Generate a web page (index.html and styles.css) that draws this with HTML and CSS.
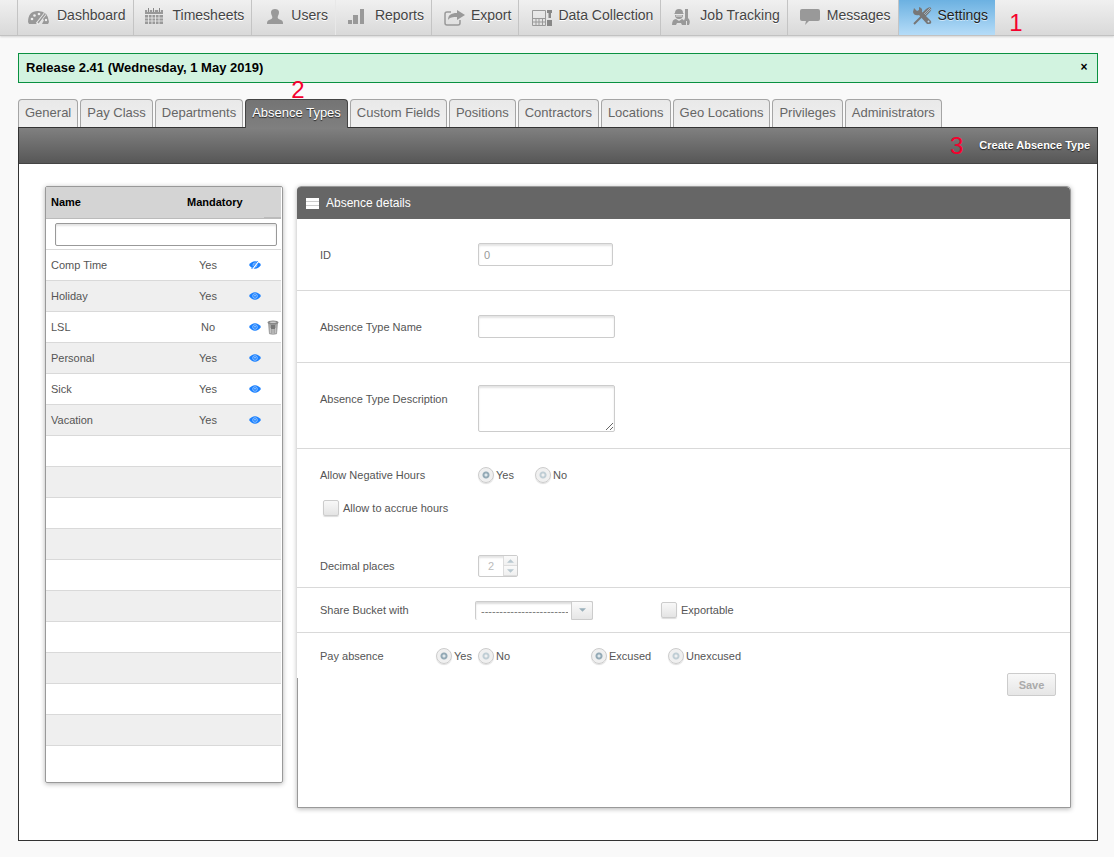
FILE: index.html
```html
<!DOCTYPE html>
<html lang="en">
<head>
    <meta charset="UTF-8">
    <meta name="viewport" content="width=device-width, initial-scale=1.0">
    <title>Settings - Absence Types</title>
    <link rel="stylesheet" href="styles.css">
</head>
<body>
    <!-- shared icons -->
    <svg width="0" height="0" class="sprite" aria-hidden="true">
        <symbol id="eye" viewBox="0 0 12 8">
            <path d="M0 4Q2.500 .3 6 .3T12 4Q9.500 7.700 6 7.700T0 4Z" fill="#1a80ff"/>
            <circle cx="6" cy="4" r="2.300" fill="none" stroke="#a9d0ff" stroke-width=".8"/>
            <circle cx="6" cy="3.700" r=".7" fill="#d5e8ff"/>
        </symbol>
        <symbol id="eye-off" viewBox="0 0 12 8">
            <path d="M0 4Q2.500 .3 6 .3T12 4Q9.500 7.700 6 7.700T0 4Z" fill="#1a80ff"/>
            <circle cx="6" cy="4" r="2" fill="none" stroke="#a9d0ff" stroke-width=".8"/>
            <path d="M3.300 8L9.500 0" stroke="#fff" stroke-width="1.800"/>
            <path d="M2.600 8L8.700 0" stroke="#1a80ff" stroke-width=".9"/>
        </symbol>
    </svg>

    <nav class="main-nav">
        <a href="#">
            <svg viewBox="0 0 39 35"><path d="M10 22q0-11 10-11t11 11l-1 2h-6l2-4-3-2-4 6h-8z" fill="#999"/><circle cx="14" cy="19" r="1.300" fill="#eee"/><circle cx="16.500" cy="15.500" r="1.300" fill="#eee"/><circle cx="21" cy="14" r="1.300" fill="#eee"/><circle cx="28" cy="20" r="1.200" fill="#eee"/><path d="M19 24l8-10" stroke="#eee" stroke-width="3"/><path d="M20 23l7-9" stroke="#999" stroke-width="1.500"/></svg>
            <span>Dashboard</span>
        </a>
        <a href="#">
            <svg viewBox="0 0 39 35"><path d="M11 10h18v4H11zM11 15h18v9H11z" fill="#999"/><path d="M14.500 8v4M19.500 8v4M25.500 8v4" stroke="#eee" stroke-width="2.500"/><path d="M14.500 8v4M19.500 8v4M25.500 8v4" stroke="#888"/><path d="M11 18h18M11 21h18M14.500 15v9M18 15v9M21.500 15v9M25 15v9" stroke="#eee" stroke-width=".8"/></svg>
            <span>Timesheets</span>
        </a>
        <a href="#">
            <svg viewBox="0 0 39 35"><path d="M20 16c-2-4-1-7 3-7s5 3 3 7c-1 2 0 3 3 4 2 1 2 2 2 4H15c0-2 0-3 2-4 3-1 4-2 3-4z" fill="#999"/></svg>
            <span>Users</span>
        </a>
        <a href="#" class="plain">
            <svg viewBox="0 0 39 35"><path d="M12 20h4v4h-4zM17 15h5v9h-5zM24 9h4v15h-4z" fill="#999"/></svg>
            <span>Reports</span>
        </a>
        <a href="#">
            <svg viewBox="0 0 39 35"><path d="M19 12h-4q-2 0-2 2v9q0 2 2 2h11q2 0 2-2v-3" fill="none" stroke="#999" stroke-width="1.500"/><path d="M16 20c0-5 3-7 9-7v-3l8 5-8 5v-3c-4 0-7 0-9 3z" fill="#999"/></svg>
            <span>Export</span>
        </a>
        <a href="#">
            <svg viewBox="0 0 39 35"><path d="M13.500 10.500h13v15h-13zM13 18.500h14M13 22h14M17 19v6M20 19v6M23.500 19v6" fill="none" stroke="#999"/><path d="M28 10h5v8h-5zM28 20h5v6h-5z" fill="#888"/><path d="M28 13h1.500v5H28zM32 13h1.500v5H32z" fill="#e6e6e6"/></svg>
            <span>Data Collection</span>
        </a>
        <a href="#">
            <svg viewBox="0 0 39 35"><path d="M14 13q0-4 4-4t4 4l1 1H13zM14 15h8q0 4-4 4t-4-4zM11 25q0-6 4-6l3 2 3-2q3 1 3 6h-3l-1-2h-4l-1 2z" fill="#999"/><path d="M15 16h6" stroke="#e6e6e6"/><path d="M24 9h3v9q3 3 1 7h-2v-4h-1v4h-2q-1-4 1-7z" fill="#999"/></svg>
            <span>Job Tracking</span>
        </a>
        <a href="#">
            <svg viewBox="0 0 39 35"><path d="M14 9h16q2 0 2 2v8q0 2-2 2h-9l-4 4 1-4h-4q-2 0-2-2v-8q0-2 2-2z" fill="#999"/></svg>
            <span>Messages</span>
        </a>
        <a href="#" class="active">
            <svg viewBox="0 0 39 35"><path d="M15 24l9-9" stroke="#777" stroke-width="2"/><path d="M22 14l5-5q4-3 5-1t-2 5l-5 5z" fill="#777"/><path d="M25 14l6-6M26 15l6-6" stroke="#b0cde0" stroke-width=".7"/><path d="M15 8l3 3 2-1 0-3q4 1 3 5l9 9q1 3-2 3h-2l-8-9q-5 1-6-3z" fill="#777"/><circle cx="29.500" cy="21.500" r="1" fill="#b5d8f0"/></svg>
            <span>Settings</span>
        </a>
        <span class="step step-1">1</span>
    </nav>

    <div class="container">
        <div class="notice">
            <strong>Release 2.41 (Wednesday, 1 May 2019)</strong>
            <button type="button" class="notice-close" aria-label="Close">×</button>
        </div>

        <div class="tabs">
            <a href="#">General</a>
            <a href="#">Pay Class</a>
            <a href="#">Departments</a>
            <a href="#" class="active">Absence Types<span class="step step-2">2</span></a>
            <a href="#">Custom Fields</a>
            <a href="#">Positions</a>
            <a href="#">Contractors</a>
            <a href="#">Locations</a>
            <a href="#">Geo Locations</a>
            <a href="#">Privileges</a>
            <a href="#">Administrators</a>
        </div>

        <main class="panel">
            <div class="toolbar">
                <span class="step">3</span>
                <a href="#">Create Absence Type</a>
            </div>

            <div class="content">
                <!-- absence type list -->
                <section class="list">
                    <table>
                        <colgroup>
                            <col class="col-name">
                            <col class="col-mandatory">
                            <col class="col-eye">
                            <col class="col-bin">
                        </colgroup>
                        <thead>
                            <tr>
                                <th>Name</th>
                                <th colspan="2">Mandatory</th>
                                <th class="end"></th>
                            </tr>
                            <tr class="filter">
                                <td colspan="4"><input type="text" aria-label="Filter by name"></td>
                            </tr>
                        </thead>
                        <tbody>
                            <tr><td>Comp Time</td><td>Yes</td><td><svg class="eye"><use href="#eye-off"/></svg></td><td></td></tr>
                            <tr><td>Holiday</td><td>Yes</td><td><svg class="eye"><use href="#eye"/></svg></td><td></td></tr>
                            <tr><td>LSL</td><td>No</td><td><svg class="eye"><use href="#eye"/></svg></td><td><svg class="bin" viewBox="0 0 12 15"><path d="M1 3h10l-1 11q-4 1.500-8 0z" fill="#a5a5a5"/><ellipse cx="6" cy="2.500" rx="5.500" ry="2" fill="#888"/><ellipse cx="6" cy="2.300" rx="3.500" ry=".8" fill="#ccc"/><path d="M3.500 8v5M6 9v5M8.500 8v5" stroke="#ccc" stroke-width=".8"/><path d="M4 5h4v4H4z" fill="#777"/></svg></td></tr>
                            <tr><td>Personal</td><td>Yes</td><td><svg class="eye"><use href="#eye"/></svg></td><td></td></tr>
                            <tr><td>Sick</td><td>Yes</td><td><svg class="eye"><use href="#eye"/></svg></td><td></td></tr>
                            <tr><td>Vacation</td><td>Yes</td><td><svg class="eye"><use href="#eye"/></svg></td><td></td></tr>
                            <tr><td colspan="4"></td></tr>
                            <tr><td colspan="4"></td></tr>
                            <tr><td colspan="4"></td></tr>
                            <tr><td colspan="4"></td></tr>
                            <tr><td colspan="4"></td></tr>
                            <tr><td colspan="4"></td></tr>
                            <tr><td colspan="4"></td></tr>
                            <tr><td colspan="4"></td></tr>
                            <tr><td colspan="4"></td></tr>
                            <tr><td colspan="4"></td></tr>
                        </tbody>
                    </table>
                </section>

                <!-- details form -->
                <form class="details">
                    <h2>
                        <svg viewBox="0 0 13 11"><path d="M0 0h13v11H0z" fill="#fff"/><path d="M0 3.500h13M0 7.500h13" stroke="#ccc"/></svg>
                        Absence details
                    </h2>
                    <div class="rows">
                        <div class="row">
                            <label class="name" for="absId">ID</label>
                            <input type="text" id="absId" class="text-id" value="0" disabled>
                        </div>
                        <div class="row">
                            <label class="name" for="absName">Absence Type Name</label>
                            <input type="text" id="absName">
                        </div>
                        <div class="row row-desc">
                            <label class="name" for="absDesc">Absence Type Description</label>
                            <textarea id="absDesc"></textarea>
                        </div>
                        <div class="row row-hours">
                            <div class="line">
                                <span class="name">Allow Negative Hours</span>
                                <label class="option spaced"><input type="radio" name="negative" checked>Yes</label>
                                <label class="option"><input type="radio" name="negative">No</label>
                            </div>
                            <div class="line accrue">
                                <label class="tick"><input type="checkbox">Allow to accrue hours</label>
                            </div>
                            <div class="line decimals">
                                <label class="name" for="decimals">Decimal places</label>
                                <div class="spinner">
                                    <input type="number" id="decimals" value="2" disabled>
                                    <div class="spinner-buttons">
                                        <button type="button" aria-label="Increase" disabled><svg viewBox="0 0 8 4"><path d="M4 0l4 4H0z" fill="#b9c8d0"/></svg></button>
                                        <button type="button" aria-label="Decrease" disabled><svg viewBox="0 0 8 4"><path d="M4 4l4-4H0z" fill="#b9c8d0"/></svg></button>
                                    </div>
                                </div>
                            </div>
                        </div>
                        <div class="row row-short">
                            <label class="name name-bucket" for="bucket">Share Bucket with</label>
                            <div class="dropdown">
                                <select id="bucket">
                                    <option>------------------------</option>
                                </select>
                                <span class="arrow"><svg viewBox="0 0 8 4"><path d="M4 4l4-4H0z" fill="#9ab0bb"/></svg></span>
                            </div>
                            <label class="tick"><input type="checkbox">Exportable</label>
                        </div>
                        <div class="row row-short">
                            <span class="name name-pay">Pay absence</span>
                            <div class="pay">
                                <label class="option"><input type="radio" name="pay" checked>Yes</label>
                                <label class="option"><input type="radio" name="pay">No</label>
                            </div>
                            <label class="option excused"><input type="radio" name="excused" checked>Excused</label>
                            <label class="option"><input type="radio" name="excused">Unexcused</label>
                        </div>
                    </div>
                    <div class="actions">
                        <button type="submit" class="save" disabled>Save</button>
                    </div>
                </form>
            </div>
        </main>
    </div>
</body>
</html>
```

FILE: styles.css
```css
* {
    box-sizing: border-box;
    margin: 0;
    padding: 0;
}

body {
    font-family: Arial, "Liberation Sans", sans-serif;
    font-size: 11px;
    color: #555;
    background: #f9f9f9;
}

a {
    color: inherit;
    text-decoration: none;
}

input,
select,
textarea,
button {
    font: inherit;
    color: inherit;
}

.sprite {
    position: absolute;
}

/* red step numbers */
.step {
    font-size: 24px;
    font-weight: normal;
    line-height: 24px;
    color: #f5002d;
    text-shadow: none;
}

.step-1 {
    padding: 11px 0 0 14px;
}

.step-2 {
    position: absolute;
    left: 45px;
    top: -22px;
}

/* main navigation */
.main-nav {
    display: flex;
    height: 36px;
    padding-left: 17px;
    background: linear-gradient(#f0f0f0, #d9d9d9);
    border-bottom: 1px solid #c2c2c2;
    box-shadow: 0 1px 2px rgba(0, 0, 0, 0.15);
}

.main-nav a {
    display: flex;
    padding-right: 7px;
    border-left: 1px solid #c4c4c4;
    font-size: 14px;
    line-height: 31px;
    color: #444;
    text-shadow: 0 1px 0 #fff;
}

.main-nav a.plain {
    border-left-color: #e8e8e8;
}

.main-nav a.active {
    color: #222;
    background: linear-gradient(#6cb1e1, #b5dcf8);
    text-shadow: 0 1px 0 #cde6f8;
}

.main-nav svg {
    flex: none;
    width: 39px;
    height: 35px;
}

.container {
    padding: 17px 16px 16px 18px;
}

.notice {
    display: flex;
    align-items: center;
    justify-content: space-between;
    height: 30px;
    padding: 0 7px 2px;
    border: 1px solid #0a9141;
    background: #d2f3e0;
    color: #000;
    font-size: 13px;
}

.notice-close {
    width: 12px;
    border: none;
    background: none;
    font-size: 12px;
    font-weight: bold;
    cursor: pointer;
}

/* settings tabs */
.tabs {
    display: flex;
    gap: 2px;
    height: 28px;
    margin-top: 16px;
}

.tabs a {
    padding: 0 6px;
    border: 1px solid #a5a5a5;
    border-bottom: none;
    border-radius: 4px 4px 0 0;
    background: linear-gradient(#e9e9e9, #f0f0f0);
    color: #666;
    font-size: 13px;
    line-height: 26px;
    white-space: nowrap;
}

.tabs a.active {
    position: relative;
    height: 29px;
    border-color: #444;
    background: linear-gradient(#747474, #7f7f7f);
    color: #fff;
    text-shadow: 0 1px 1px #222;
}

.panel {
    border: 1px solid #333;
    background: #fff;
}

.toolbar {
    display: flex;
    justify-content: flex-end;
    align-items: center;
    gap: 10px;
    height: 36px;
    padding-right: 6px;
    border-bottom: 1px solid #444;
    background: linear-gradient(#808080, #575757);
}

.toolbar a {
    padding: 0 1px 2px 6px;
    color: #fff;
    font-weight: bold;
    text-shadow: 0 1px 1px #222;
}

.content {
    display: flex;
    align-items: flex-start;
    gap: 14px;
    padding: 22px 26px 32px;
}

/* list */
.list {
    flex: none;
    width: 238px;
    padding: 0 1px 36px 0;
    border: 1px solid #999;
    border-radius: 2px;
    box-shadow: 0 1px 5px rgba(0, 0, 0, 0.3);
}

table {
    width: 100%;
    table-layout: fixed;
    border-collapse: separate;
    border-spacing: 0;
}

.col-name {
    width: 136px;
}

.col-mandatory {
    width: 52px;
}

.col-eye {
    width: 30px;
}

th {
    height: 32px;
    padding: 0 5px 2px;
    border-bottom: 1px solid #bbb;
    background: #d4d4d4;
    color: #000;
    text-align: left;
}

th.end {
    padding: 0;
    border-bottom-width: 2px;
}

td {
    height: 31px;
    border-bottom: 1px solid #d9d9d9;
}

tbody tr:nth-child(even) {
    background: #efefef;
}

td:first-child {
    padding-left: 5px;
}

td:nth-child(2) {
    text-align: center;
}

td:nth-child(3) {
    padding: 0 3px 2px 0;
    text-align: right;
}

td:nth-child(4) {
    padding-left: 3px;
}

.filter td {
    padding: 0 4px 0 9px;
}

.filter input {
    width: 100%;
}

.eye,
.bin {
    display: inline-block;
    width: 12px;
    height: 8px;
    vertical-align: middle;
}

.bin {
    height: 15px;
}

/* details */
.details {
    flex: 1;
    min-height: 622px;
    border: 1px solid #999;
    border-radius: 4px 4px 0 0;
    box-shadow: 0 1px 5px rgba(0, 0, 0, 0.3);
}

.details h2 {
    display: flex;
    align-items: center;
    gap: 7px;
    height: 32px;
    margin: 0 0 0 -1px;
    padding-left: 9px;
    border-radius: 4px 4px 0 0;
    background: #666;
    color: #fff;
    font-size: 12px;
    font-weight: normal;
}

.details h2 svg {
    width: 13px;
    height: 11px;
}

.rows {
    margin-left: -1px;
    background: #fff;
}

.row {
    display: flex;
    align-items: center;
    height: 72px;
    padding-left: 23px;
    border-bottom: 1px solid #d9d9d9;
}

.row:last-child {
    border-bottom: none;
}

.row-desc {
    align-items: flex-start;
    height: 86px;
    padding-top: 22px;
}

.row-desc .name {
    padding-top: 8px;
}

.row-hours {
    display: block;
    height: 139px;
    padding-top: 15px;
}

.row-short {
    height: 45px;
}

.name {
    width: 158px;
}

.name-bucket {
    width: 155px;
}

.name-pay {
    width: 116px;
}

.line {
    display: flex;
    align-items: center;
    height: 22px;
}

.accrue {
    margin-top: 11px;
    padding-left: 3px;
}

.decimals {
    margin-top: 36px;
}

input[type="text"],
textarea {
    width: 137px;
    height: 23px;
    padding: 0 5px;
    border: 1px solid #ccc;
    border-radius: 2px;
    background: #fff;
    box-shadow: inset 0 2px 2px #e4e4e4;
}

.details input.text-id {
    width: 135px;
    color: #999;
}

.filter input[type="text"] {
    width: 100%;
    border-color: #999;
}

textarea {
    display: block;
    height: 47px;
}

.option,
.tick {
    display: flex;
    align-items: center;
    gap: 2px;
}

.tick {
    gap: 4px;
}

.option.spaced {
    width: 57px;
}

input[type="radio"],
input[type="checkbox"] {
    appearance: none;
    flex: none;
    width: 16px;
    height: 16px;
    border: 1px solid #ccc;
    border-radius: 2px;
    background: linear-gradient(#f8f8f8, #e4e4e4);
    box-shadow: 0 1px 1px #ddd;
}

input[type="radio"] {
    border-radius: 50%;
    background: radial-gradient(circle, #f0f0f0 1px, #c0ced5 2px, #c0ced5 3px, #f0f0f0 4px);
}

input[type="radio"]:checked {
    background: radial-gradient(circle, #e0e8ec 1px, #94aab6 2px, #94aab6 3px, #f0f0f0 4px);
}

.pay {
    display: flex;
    gap: 6px;
    width: 155px;
}

.excused {
    width: 77px;
}

.spinner {
    display: flex;
    width: 40px;
    height: 22px;
    border: 1px solid #ccc;
    border-radius: 2px;
    box-shadow: inset 0 2px 2px #e4e4e4;
}

.spinner input {
    appearance: textfield;
    width: 24px;
    border: none;
    background: none;
    color: #bbb;
    text-align: center;
}

.spinner input::-webkit-inner-spin-button {
    display: none;
}

.spinner-buttons {
    display: flex;
    flex: 1;
    flex-direction: column;
}

.spinner-buttons button {
    display: flex;
    flex: 1;
    align-items: center;
    justify-content: center;
    border: 0 solid #ddd;
    border-width: 0 0 1px 1px;
    background: linear-gradient(#fafafa, #f0f0f0);
}

.spinner-buttons svg,
.arrow svg {
    width: 7px;
    height: 4px;
}

.dropdown {
    position: relative;
    width: 118px;
    height: 19px;
    margin-right: 68px;
}

.dropdown select {
    appearance: none;
    width: 100%;
    height: 19px;
    padding: 0 24px 0 5px;
    border: 1px solid #ccc;
    border-bottom: none;
    border-radius: 2px;
    background: #fff;
    box-shadow: inset 0 2px 2px #ddd;
    color: #777;
}

.arrow {
    position: absolute;
    top: 0;
    right: 0;
    display: flex;
    align-items: center;
    justify-content: center;
    width: 22px;
    height: 19px;
    border: 1px solid #ccc;
    border-radius: 0 2px 2px 0;
    background: linear-gradient(#fafafa, #e6e6e6);
    pointer-events: none;
}

/* the button sits partly over the last row */
.actions {
    display: flex;
    justify-content: flex-end;
    margin-top: -5px;
    padding-right: 14px;
}

.save {
    width: 49px;
    height: 23px;
    border: 1px solid #ccc;
    border-radius: 2px;
    background: linear-gradient(#f8f8f8, #e6e6e6);
    color: #aaa;
    font-weight: bold;
}
```
